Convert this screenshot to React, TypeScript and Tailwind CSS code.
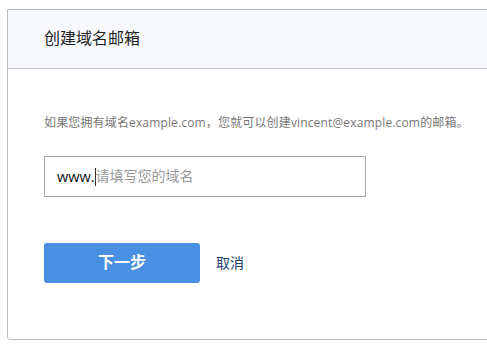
export default function App() {
  return (
    <div className="h-[350px] w-[487px] overflow-hidden bg-white pl-[7px] pt-[9px] font-['Liberation_Sans','Noto_Sans_CJK_SC',sans-serif]">
      <div className="h-[331px] w-[500px] rounded-bl-[3px] border border-[#b9bcc2] bg-white">
        <div className="flex h-[59px] items-center border-b border-[#c5c8cd] bg-[#f8f9fc] pl-[36px] text-[16px] text-[#222]">
          创建域名邮箱
        </div>
        <div className="pl-[36px] pt-[46px]">
          <p className="font-['Open_Sans','Noto_Sans_CJK_SC',sans-serif] text-[12px] leading-[16px] tracking-[0.15px] text-[#777]">
            如果您拥有域名example.com，您就可以创建vincent@example.com的邮箱。
          </p>
          <div className="mt-[25px] flex h-[41px] w-[322px] items-center border border-[#a6a8ab] pl-[12px] text-[14px]">
            <span className="font-['Open_Sans',sans-serif] text-[14.5px] text-[#111]">www.</span>
            <span className="h-[18px] w-px bg-[#333]" />
            <span className="text-[#999]">请填写您的域名</span>
          </div>
          <div className="mt-[46px] flex items-center">
            <button className="flex h-[40px] w-[156px] items-center justify-center rounded-[3px] bg-[#4a90e2] text-[16px] font-bold text-white">
              下一步
            </button>
            <span className="ml-[16px] text-[14px] text-[#23406e]">取消</span>
          </div>
        </div>
      </div>
    </div>
  );
}
